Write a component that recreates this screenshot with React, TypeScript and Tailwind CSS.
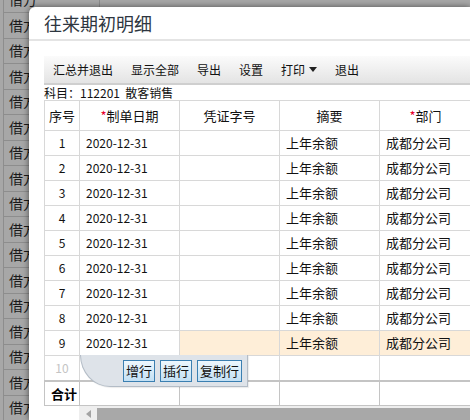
import React from "react";

const rows = Array.from({ length: 9 }, (_, i) => i + 1);
const bgRows = Array.from({ length: 18 }, (_, i) => i);

const font = { fontFamily: '"SimSun", "Noto Sans CJK SC", "Liberation Sans", sans-serif' };

function Star() {
    return <span className="text-[#e8002b]">*</span>;
}

export default function App() {
    return (
        <div className="relative w-[470px] h-[420px] overflow-hidden bg-[#a7a7a7] text-[#111]" style={font}>
            {/* spreadsheet behind the dialog */}
            <div className="-mt-[12.5px] pl-[3px]">
                {bgRows.map((i) => (
                    <div key={i} className="flex h-[25.5px] border-b border-[#8d8d8d]">
                        <div className="w-[97px] border-x border-[#8d8d8d] pl-[5px] flex items-center text-[14px] text-[#1a1a1a]">借方</div>
                        <div className="flex-1" />
                    </div>
                ))}
            </div>

            {/* dialog */}
            <div className="absolute left-[29px] top-[7px] right-0 bottom-0 bg-white rounded-tl-[6px] overflow-hidden shadow-[0_0_6px_rgba(0,0,0,0.55)]">
                <div className="h-[34px] border-b-2 border-[#e4e4e4] pl-[15px] flex items-center text-[18px] text-[#2e3640]">往来期初明细</div>

                <div className="pl-[15px] pt-[15px]">
                    <div className="h-[29px] flex items-center bg-gradient-to-b from-[#fbfbfb] to-[#e4e4e4] border-b-2 border-[#cfcfcf] text-[12px] text-[#111]">
                        <span className="px-[9px]">汇总并退出</span>
                        <span className="px-[9px]">显示全部</span>
                        <span className="px-[9px]">导出</span>
                        <span className="px-[9px]">设置</span>
                        <span className="px-[9px] flex items-center">
                            打印
                            <svg className="ml-[4px]" width="8" height="5" viewBox="0 0 8 5">
                                <path d="M0 0h8L4 5z" fill="#222" />
                            </svg>
                        </span>
                        <span className="px-[9px]">退出</span>
                    </div>

                    <div className="h-[15px] leading-[15px] text-[12px] whitespace-nowrap">科目：112201&nbsp;&nbsp;散客销售</div>

                    <div className="relative">
                        <table className="border-collapse table-fixed w-[427px] text-[12px]">
                            <colgroup>
                                <col className="w-[35px]" />
                                <col className="w-[100px]" />
                                <col className="w-[100px]" />
                                <col className="w-[100px]" />
                                <col className="w-[92px]" />
                            </colgroup>
                            <thead>
                                <tr className="h-[30px] text-[13px]">
                                    <th className="border border-[#d8d8d8] font-normal text-center">序号</th>
                                    <th className="border border-[#d8d8d8] font-normal text-center"><Star />制单日期</th>
                                    <th className="border border-[#d8d8d8] font-normal text-center">凭证字号</th>
                                    <th className="border border-[#d8d8d8] font-normal text-center">摘要</th>
                                    <th className="border border-[#d8d8d8] font-normal text-center whitespace-nowrap"><Star />部门</th>
                                </tr>
                            </thead>
                            <tbody>
                                {rows.map((n) => {
                                    const hi = n === 9 ? "bg-[#feeed8]" : "";
                                    return (
                                        <tr key={n} className="h-[25px]">
                                            <td className="border border-[#d8d8d8] text-center">{n}</td>
                                            <td className="border border-[#d8d8d8] pl-[6px]">2020-12-31</td>
                                            <td className={`border border-[#d8d8d8] ${hi}`} />
                                            <td className={`border border-[#d8d8d8] pl-[6px] text-[13px] ${hi}`}>上年余额</td>
                                            <td className={`border border-[#d8d8d8] pl-[6px] text-[13px] whitespace-nowrap ${hi}`}>成都分公司</td>
                                        </tr>
                                    );
                                })}
                                <tr className="h-[25px]">
                                    <td className="border border-[#d8d8d8] text-center text-[#c4c4c4]">10</td>
                                    <td className="border border-[#d8d8d8]" />
                                    <td className="border border-[#d8d8d8]" />
                                    <td className="border border-[#d8d8d8]" />
                                    <td className="border border-[#d8d8d8]" />
                                </tr>
                                <tr className="h-[25px] border-t-2 border-[#c4c4c4]">
                                    <td className="border-x border-b border-[#c4c4c4] pl-[6px] text-[13px] font-bold text-black">合计</td>
                                    <td className="border-x border-b border-[#c4c4c4]" />
                                    <td className="border-x border-b border-[#c4c4c4]" />
                                    <td className="border-x border-b border-[#c4c4c4]" />
                                    <td className="border-x border-b border-[#c4c4c4]" />
                                </tr>
                            </tbody>
                        </table>

                        {/* horizontal scrollbar */}
                        <div className="flex h-[15px]">
                            <div className="w-[35px] bg-white" />
                            <div className="w-[18px] bg-[#eeeeee] flex items-center justify-center">
                                <svg width="5" height="8" viewBox="0 0 5 8">
                                    <path d="M5 0v8L0 4z" fill="#a3a3a3" />
                                </svg>
                            </div>
                            <div className="flex-1 bg-[#eeeeee] pt-[2px]">
                                <div className="h-full bg-[#a8a8a8]" />
                            </div>
                        </div>

                        {/* row action popup */}
                        <div className="absolute left-[36px] top-[255px] w-[168px] h-[32px] bg-[#dee3e9] border-r border-b border-l border-[#b3bcc6] rounded-bl-[30px_32px] flex justify-end gap-[5px] pr-[5px] pt-[5px] shadow-[1px_1px_1px_rgba(0,0,0,0.08)]">
                            <button className="h-[22px] w-[32px] border border-[#3b7fb1] bg-gradient-to-b from-[#eef7fd] to-[#c2e0f4] text-[13px] leading-[20px] text-[#111]">增行</button>
                            <button className="h-[22px] w-[32px] border border-[#3b7fb1] bg-gradient-to-b from-[#eef7fd] to-[#c2e0f4] text-[13px] leading-[20px] text-[#111]">插行</button>
                            <button className="h-[22px] w-[45px] border border-[#3b7fb1] bg-gradient-to-b from-[#eef7fd] to-[#c2e0f4] text-[13px] leading-[20px] text-[#111]">复制行</button>
                        </div>
                    </div>
                </div>
            </div>
        </div>
    );
}
